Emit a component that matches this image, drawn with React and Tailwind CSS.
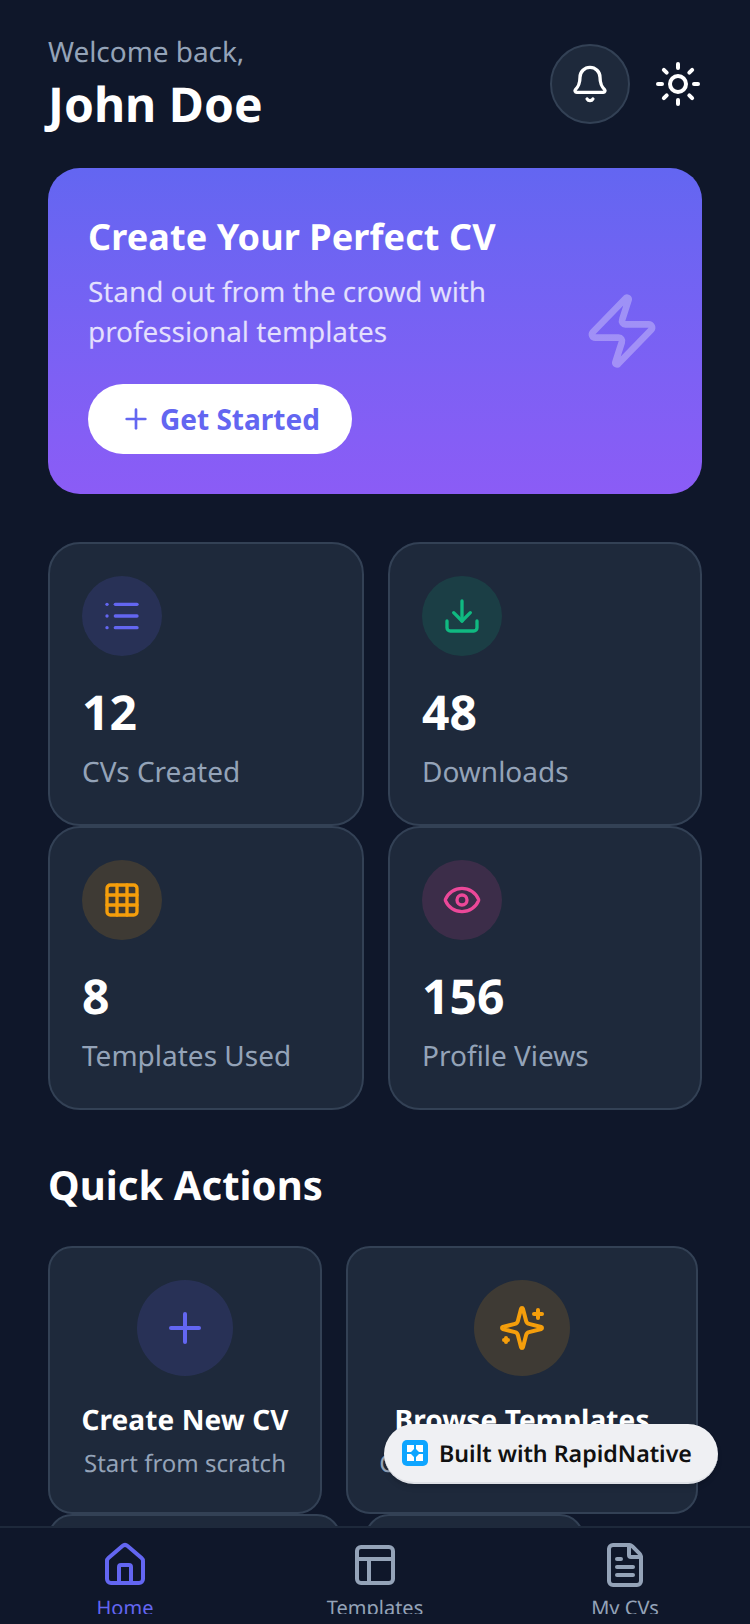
import React from 'react'
import { Bell, Sun, Plus, Zap, List, Download, Grid3x3, Eye, House, PanelsTopLeft, FileText } from 'lucide-react'

const STATS = [
  { value: '12', label: 'CVs Created', Icon: List, circle: 'bg-[#6366f1]/15', color: 'text-[#6366f1]' },
  { value: '48', label: 'Downloads', Icon: Download, circle: 'bg-[#10b981]/15', color: 'text-[#10b981]' },
  { value: '8', label: 'Templates Used', Icon: Grid3x3, circle: 'bg-[#f59e0b]/15', color: 'text-[#f59e0b]' },
  { value: '156', label: 'Profile Views', Icon: Eye, circle: 'bg-[#ec4899]/15', color: 'text-[#ec4899]' }
]

// the older lucide sparkles, its small plus reads as a dot at this size
function Sparkles({ size, strokeWidth, className }) {
  return (
    <svg width={size} height={size} viewBox="0 0 24 24" fill="none" stroke="currentColor" strokeWidth={strokeWidth} strokeLinecap="round" strokeLinejoin="round" className={className}>
      <path d="M9.937 15.5A2 2 0 0 0 8.5 14.063l-6.135-1.582a.5.5 0 0 1 0-.962L8.5 9.936A2 2 0 0 0 9.937 8.5l1.582-6.135a.5.5 0 0 1 .963 0L14.063 8.5A2 2 0 0 0 15.5 9.937l6.135 1.581a.5.5 0 0 1 0 .964L15.5 14.063a2 2 0 0 0-1.437 1.437l-1.582 6.135a.5.5 0 0 1-.963 0z" />
      <path d="M20 3v4" />
      <path d="M22 5h-4" />
      <path d="M4 17v2" />
      <path d="M5 18H3" />
    </svg>
  )
}

const ACTIONS = [
  { title: 'Create New CV', sub: 'Start from scratch', Icon: Plus, width: 'w-[274px]', circle: 'bg-[#6366f1]/15', color: 'text-[#6366f1]' },
  { title: 'Browse Templates', sub: 'Choose from 50+ designs', Icon: Sparkles, width: 'w-[352px]', circle: 'bg-[#f59e0b]/15', color: 'text-[#f59e0b]' }
]

const TABS = [
  { label: 'Home', Icon: House, color: 'text-[#6366f1]' },
  { label: 'Templates', Icon: PanelsTopLeft, color: 'text-[#94a3b8]' },
  { label: 'My CVs', Icon: FileText, color: 'text-[#94a3b8]' }
]

function StatCard({ value, label, Icon, circle, color }) {
  return (
    <div className="h-[284px] rounded-[32px] border-2 border-[#334155] bg-[#1e293b] p-8">
      <div className={`flex h-20 w-20 items-center justify-center rounded-full ${circle}`}>
        <Icon size={40} strokeWidth={2} className={color} />
      </div>
      <div className="mt-[21px] text-[48px] leading-[72px] font-bold text-white">{value}</div>
      <div className="mt-[2px] text-[28px] leading-[42px] text-[#94a3b8]">{label}</div>
    </div>
  )
}

function ActionCard({ title, sub, Icon, width, circle, color }) {
  return (
    <div className={`flex h-[268px] flex-col items-center rounded-3xl border-2 border-[#334155] bg-[#1e293b] pt-8 ${width}`}>
      <div className={`flex h-24 w-24 items-center justify-center rounded-full ${circle}`}>
        <Icon size={48} strokeWidth={2} className={color} />
      </div>
      <div className="mt-[23px] text-[28px] leading-[42px] font-bold tracking-[0.1px] text-white">{title}</div>
      <div className="mt-[5px] text-[24px] leading-[36px] text-[#94a3b8]">{sub}</div>
    </div>
  )
}

export default function App() {
  return (
    <div className="relative flex h-[1624px] w-[750px] flex-col overflow-hidden bg-[#0f172a] font-['Noto_Sans',sans-serif] [text-rendering:geometricPrecision]">
      <main className="min-h-0 flex-1 overflow-hidden px-12 pt-[31px]">
        <header className="flex items-start justify-between">
          <div>
            <div className="text-[28px] leading-[42px] tracking-[-0.05px] text-[#94a3b8]">Welcome back,</div>
            <div className="text-[48px] leading-[64px] font-bold text-white">John Doe</div>
          </div>
          <div className="mt-[13px] flex items-center gap-6">
            <div className="flex h-20 w-20 items-center justify-center rounded-full border-2 border-[#334155] bg-[#1e293b] text-white">
              <Bell size={40} strokeWidth={2} />
            </div>
            <Sun size={48} strokeWidth={2} className="text-white" />
          </div>
        </header>

        <section className="mt-[31px] flex h-[326px] items-center justify-between rounded-[32px] bg-gradient-to-b from-[#6366f1] to-[#8b5cf6] px-10">
          <div className="self-start pt-[42px]">
            <h1 className="text-[36px] leading-[54px] font-bold tracking-[0.1px] text-white">Create Your Perfect CV</h1>
            <p className="mt-[8px] w-[460px] text-[28px] leading-[40px] tracking-[-0.07px] text-white/80">Stand out from the crowd with professional templates</p>
            <button className="mt-[32px] flex h-[70px] items-center gap-2 rounded-full bg-white px-8 text-[28px] font-bold text-[#6366f1]">
              <Plus size={32} strokeWidth={2} />
              Get Started
            </button>
          </div>
          <Zap size={80} strokeWidth={2} className="text-white/30" />
        </section>

        <section className="mt-12 grid grid-cols-[316px_314px] gap-x-6">
          {STATS.map(s => <StatCard key={s.label} {...s} />)}
        </section>

        <h2 className="mt-[45px] text-[40px] leading-[60px] font-bold tracking-[0.05px] text-white">Quick Actions</h2>

        <section className="mt-[31px] flex flex-wrap gap-x-6">
          {ACTIONS.map(a => <ActionCard key={a.title} {...a} />)}
          <div className="h-[268px] w-[293px] rounded-3xl border-2 border-[#334155] bg-[#1e293b]" />
          <div className="h-[268px] w-[219px] rounded-3xl border-2 border-[#334155] bg-[#1e293b]" />
        </section>
      </main>

      <nav className="h-[98px] shrink-0 border-t-2 border-[#1e293b] bg-[#0f172a]">
        <div className="flex h-[86px] justify-around overflow-hidden pt-[13px]">
          {TABS.map(t => (
            <div key={t.label} className={`flex w-[250px] flex-col items-center ${t.color}`}>
              <t.Icon size={48} strokeWidth={2} className="shrink-0" />
              <span className="mt-1 text-[20px] leading-[30px]">{t.label}</span>
            </div>
          ))}
        </div>
      </nav>

      <div className="absolute top-[1424px] left-[384px] flex h-[60px] w-[334px] items-center gap-[11px] rounded-full border-b-2 border-[#dfe1e6] bg-[#eff0f3] pl-[18px] shadow-md">
        <svg width="26" height="26" viewBox="0 0 26 26">
          <rect width="26" height="26" rx="5" fill="#0ea5ff" />
          <path d="M5 5h7v4l-3 3H5zM14 5h7v7h-4l-3-3zM5 14h4l3 3v4H5zM21 14v7h-7v-4l3-3z" fill="#fff" />
        </svg>
        <span className="text-[23.2px] font-semibold text-[#111]">Built with RapidNative</span>
      </div>
    </div>
  )
}
